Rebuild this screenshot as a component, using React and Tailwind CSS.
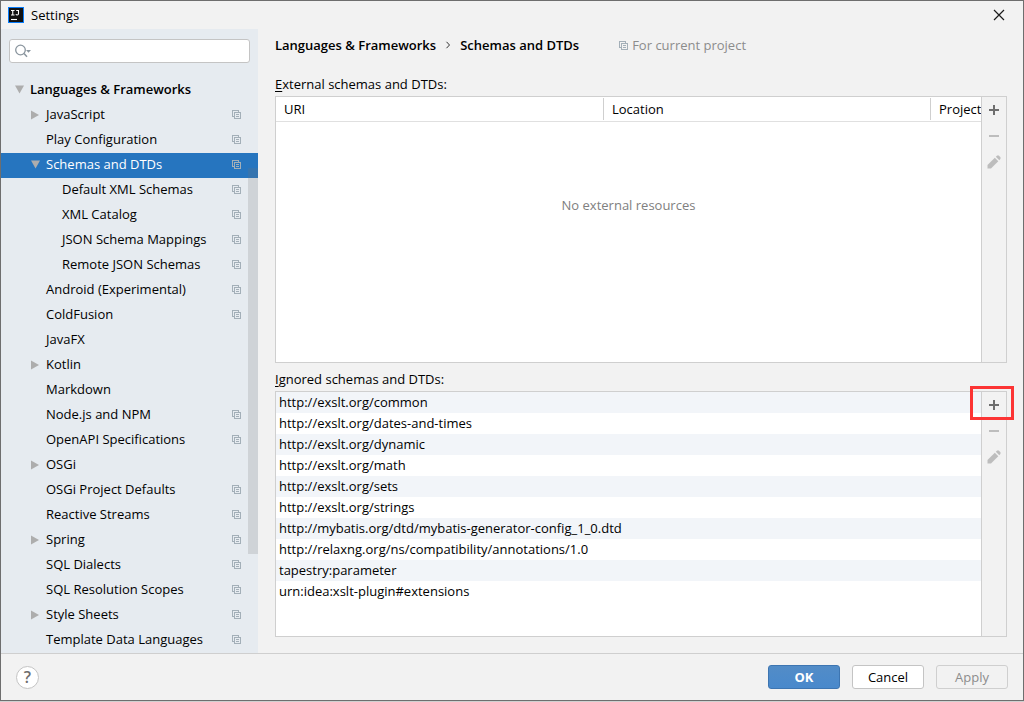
import React, { useState } from 'react';
import clsx from 'clsx';

const treeItems = [
  { label: 'Languages & Frameworks', level: 0, arrow: 'down' },
  { label: 'JavaScript', level: 1, arrow: 'right', project: true },
  { label: 'Play Configuration', level: 1, project: true },
  { label: 'Schemas and DTDs', level: 1, arrow: 'down', project: true },
  { label: 'Default XML Schemas', level: 2, project: true },
  { label: 'XML Catalog', level: 2, project: true },
  { label: 'JSON Schema Mappings', level: 2, project: true },
  { label: 'Remote JSON Schemas', level: 2, project: true },
  { label: 'Android (Experimental)', level: 1, project: true },
  { label: 'ColdFusion', level: 1, project: true },
  { label: 'JavaFX', level: 1 },
  { label: 'Kotlin', level: 1, arrow: 'right' },
  { label: 'Markdown', level: 1 },
  { label: 'Node.js and NPM', level: 1, project: true },
  { label: 'OpenAPI Specifications', level: 1, project: true },
  { label: 'OSGi', level: 1, arrow: 'right' },
  { label: 'OSGi Project Defaults', level: 1, project: true },
  { label: 'Reactive Streams', level: 1, project: true },
  { label: 'Spring', level: 1, arrow: 'right', project: true },
  { label: 'SQL Dialects', level: 1, project: true },
  { label: 'SQL Resolution Scopes', level: 1, project: true },
  { label: 'Style Sheets', level: 1, arrow: 'right', project: true },
  { label: 'Template Data Languages', level: 1, project: true }
];

const ignoredSchemas = [
  'http://exslt.org/common',
  'http://exslt.org/dates-and-times',
  'http://exslt.org/dynamic',
  'http://exslt.org/math',
  'http://exslt.org/sets',
  'http://exslt.org/strings',
  'http://mybatis.org/dtd/mybatis-generator-config_1_0.dtd',
  'http://relaxng.org/ns/compatibility/annotations/1.0',
  'tapestry:parameter',
  'urn:idea:xslt-plugin#extensions'
];

const indents = ['pl-3', 'pl-7', 'pl-11'];

const ProjectIcon = () => (
  <svg className="h-[9px] w-[9px] shrink-0" viewBox="0 0 9 9" fill="none" stroke="#a3afb8" shapeRendering="crispEdges">
    <path d="M2.5 6.5H0.5V0.5H6.5V2.5" />
    <path d="M2.5 2.5H8.5V8.5H2.5Z" />
    <path d="M4 4.5H7M4 6.5H7" />
  </svg>
);

const Arrow = ({ direction }) => (
  <svg className="h-3 w-3 shrink-0" viewBox="0 0 12 12" fill="#adadad">
    {direction === 'down' && <path d="M2 1.5H11L6.5 9.5Z" />}
    {direction === 'right' && <path d="M2 1.5V10.5L10 6Z" />}
  </svg>
);

const Logo = () => (
  <svg className="h-4 w-4" viewBox="0 0 16 16">
    <rect width="16" height="16" fill="#087cfa" />
    <rect x="1" y="1" width="14" height="14" fill="#111" />
    <g stroke="#fff" strokeWidth="1.1" fill="none">
      <path d="M3 3.5H6.5M4.75 3.5V8M3 8H6.5" />
      <path d="M8.2 3.5H11M10.5 3.5V6.6Q10.5 8 9.2 8Q8.3 8 7.8 7.4" />
      <path d="M3 12.5H9" />
    </g>
  </svg>
);

const SearchIcon = () => (
  <svg className="h-4 w-[18px] shrink-0" viewBox="0 0 18 16" fill="none" stroke="#8a959e">
    <circle cx="5.5" cy="7" r="4.8" strokeWidth="1.3" />
    <path d="M9 10.5L12 13.7" strokeWidth="1.5" />
    <path d="M11 7H16L13.5 9.8Z" fill="#8a959e" stroke="none" />
  </svg>
);

const Toolbar = ({ name }) => (
  <div className="flex w-[25px] shrink-0 flex-col border-l border-[#cfcfcf] bg-[#f2f2f2]">
    <button aria-label={`Add ${name}`} className="flex h-[26px] items-center justify-center">
      <svg className="h-3 w-3" viewBox="0 0 12 12" shapeRendering="crispEdges" fill="#6e6e6e">
        <path d="M5 1H7V5H11V7H7V11H5V7H1V5H5Z" />
      </svg>
    </button>
    <button aria-label={`Remove ${name}`} disabled className="flex h-[26px] items-center justify-center">
      <svg className="h-3 w-3" viewBox="0 0 12 12" shapeRendering="crispEdges" fill="#bdbdbd">
        <path d="M1 5H11V7H1Z" />
      </svg>
    </button>
    <button aria-label={`Edit ${name}`} disabled className="flex h-[26px] items-center justify-center">
      <svg className="h-[14px] w-[14px]" viewBox="0 0 14 14" fill="#bdbdbd">
        <path d="M0.5 13.5V10L7.8 2.7L11.3 6.2L4 13.5Z" />
        <path d="M8.8 1.7L10 0.7Q11 0 11.9 0.7L13.3 2.1Q14 3 13.3 4L12.3 5.2Z" />
      </svg>
    </button>
  </div>
);

const Sidebar = () => {
  const [query, setQuery] = useState('');
  const [selected, setSelected] = useState('Schemas and DTDs');

  return (
    <aside className="relative flex w-[257px] shrink-0 flex-col bg-[#e6ebf0]">
      <label className="mx-2 mt-[10px] flex h-6 items-center rounded-[3px] border border-[#c4c4c4] bg-white pl-[5px]">
        <SearchIcon />
        <input
          type="text"
          aria-label="Search settings"
          value={query}
          onChange={(e) => setQuery(e.target.value)}
          className="min-w-0 flex-1 bg-transparent px-1 outline-none"
        />
      </label>
      <ul className="mt-[15px]">
        {treeItems.map((item) => {
          const active = item.label === selected;
          return (
            <li key={item.label}>
              <button
                onClick={() => setSelected(item.label)}
                className={clsx(
                  'flex h-[25px] w-full items-center pr-[17px] pb-[2px] text-left',
                  indents[item.level],
                  item.level === 0 && 'font-semibold',
                  active && 'bg-[#2675bf] text-white'
                )}
              >
                <Arrow direction={item.arrow} />
                <span className="ml-[5px] flex-1 pb-[2px] whitespace-nowrap">{item.label}</span>
                {item.project && <ProjectIcon />}
              </button>
            </li>
          );
        })}
      </ul>
      {/* Scrollbar thumb */}
      <div className="absolute top-[139px] right-0 h-[386px] w-[10px] bg-[#737373]/20" />
    </aside>
  );
};

const App = () => {
  return (
    <div className="flex min-h-screen flex-col bg-[#d0d0d0] pb-px font-['Open_Sans','Noto_Sans',sans-serif] text-[13px] leading-5 text-black">
      <div className="flex flex-1 flex-col border border-[#6e6e6e] bg-[#f2f2f2]">
        {/* Title bar */}
        <header className="flex h-7 items-center pr-[18px] pl-[7px]">
          <Logo />
          <h1 className="ml-[7px] flex-1">Settings</h1>
          <button aria-label="Close">
            <svg className="h-3 w-3" viewBox="0 0 12 12" stroke="#1a1a1a" strokeWidth="1.2">
              <path d="M1 1L11 11M11 1L1 11" />
            </svg>
          </button>
        </header>

        <div className="flex flex-1">
          <Sidebar />

          <main className="flex min-w-0 flex-1 flex-col pr-4 pb-4 pl-[17px]">
            <div className="mt-[6px] flex h-5 items-center">
              <h2 className="flex items-center font-semibold">
                <span>Languages &amp; Frameworks</span>
                <svg className="mx-[9px] h-2 w-[6px]" viewBox="0 0 6 8" fill="none" stroke="#333">
                  <path d="M1.5 0.8L4.5 4L1.5 7.2" />
                </svg>
                <span>Schemas and DTDs</span>
              </h2>
              <span className="ml-10 flex items-center gap-1 text-[#8c8c8c]">
                <ProjectIcon />
                For current project
              </span>
            </div>

            {/* External schemas */}
            <h3 id="external-label" className="mt-[19px] mb-[2px]">
              <u className="underline-offset-2">E</u>xternal schemas and DTDs:
            </h3>
            <div className="flex flex-[267] border border-[#cfcfcf] bg-white">
              <div className="flex min-w-0 flex-1 flex-col">
                <table aria-labelledby="external-label" className="w-full table-fixed border-b border-[#e0e0e0] text-left">
                  <thead>
                    <tr className="h-6">
                      <th className="p-0 font-normal">
                        <div className="pl-2 leading-[22px]">URI</div>
                      </th>
                      <th className="p-0 font-normal">
                        <div className="border-l border-[#cfcfcf] pl-2 leading-[22px]">Location</div>
                      </th>
                      <th className="w-[51px] p-0 font-normal">
                        <div className="overflow-hidden border-l border-[#cfcfcf] pl-2 leading-[22px]">Project</div>
                      </th>
                    </tr>
                  </thead>
                </table>
                <p className="pt-[73px] text-center text-[#808080]">No external resources</p>
              </div>
              <Toolbar name="external schema" />
            </div>

            {/* Ignored schemas */}
            <h3 className="mt-[6px] mb-[2px]">
              <u className="underline-offset-2">I</u>gnored schemas and DTDs:
            </h3>
            <div className="relative flex flex-[246] border border-[#cfcfcf] bg-white">
              <ul className="min-w-0 flex-1">
                {ignoredSchemas.map((uri) => (
                  <li key={uri} className="h-[21px] pl-[3px] leading-[21px] odd:bg-[#f2f5f9]">
                    {uri}
                  </li>
                ))}
              </ul>
              <Toolbar name="ignored schema" />
              {/* Highlight around the add button */}
              <div className="pointer-events-none absolute -top-[6px] -right-2 h-[34px] w-11 border-3 border-[#fc3434]" />
            </div>
          </main>
        </div>

        {/* Footer */}
        <footer className="flex h-[47px] items-center gap-3 border-t border-[#cfcfcf] px-[15px]">
          <button
            aria-label="Help"
            className="flex h-[23px] w-[23px] items-center justify-center rounded-full border border-[#c4c4c4] bg-white text-base font-semibold text-[#6e6e6e]"
          >
            ?
          </button>
          <div className="flex-1" />
          <button className="h-6 w-[72px] rounded-[3px] border border-[#3d75b1] bg-linear-to-b from-[#528cc7] to-[#4989cc] leading-[22px] font-bold text-white">
            OK
          </button>
          <button className="h-6 w-[72px] rounded-[3px] border border-[#c4c4c4] bg-white leading-[22px]">
            Cancel
          </button>
          <button disabled className="h-6 w-[72px] rounded-[3px] border border-[#cfcfcf] leading-[22px] text-[#8c8c8c]">
            Apply
          </button>
        </footer>
      </div>
    </div>
  );
};

export default App;
